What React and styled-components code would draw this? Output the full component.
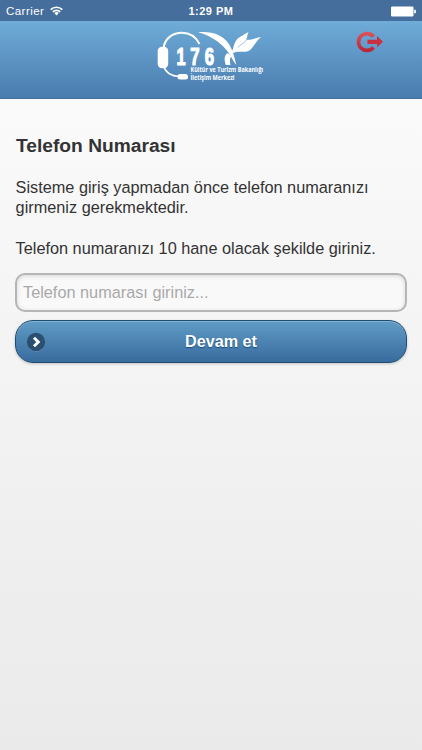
import styled, { createGlobalStyle } from 'styled-components';

const GlobalStyle = createGlobalStyle`
  * {
    box-sizing: border-box;
  }

  body {
    margin: 0;
    font-family: "Liberation Sans", Arial, sans-serif;
    color: #333;
  }
`;

const Screen = styled.div`
  display: flex;
  flex-direction: column;
  height: 750px;
  background: linear-gradient(#fafafa 99px, #eaeaea);
  overflow: hidden;
`;

const StatusBar = styled.div`
  display: grid;
  grid-template-columns: 1fr auto 1fr;
  align-items: center;
  height: 21px;
  padding: 1px 6px 0;
  background: #456e9c;
  color: #fff;
  font-size: 11.5px;
  line-height: 20px;
`;

const Carrier = styled.div`
  display: flex;
  align-items: center;
  gap: 6px;
  letter-spacing: 0.45px;
`;

const Clock = styled.span`
  font-weight: 700;
  font-size: 11px;
  letter-spacing: 0.5px;
`;

const Battery = styled.svg`
  justify-self: end;
`;

const Header = styled.header`
  display: grid;
  grid-template-columns: 1fr 120px 1fr;
  height: 78px;
  padding-top: 3px;
  background: linear-gradient(#6facd8, #497bae);
  border-bottom: 1px solid #456f9a;
`;

const Logo = styled.svg`
  width: 120px;
  height: 62px;
  margin-left: -1px;
`;

const ExitButton = styled.button`
  justify-self: end;
  width: 40px;
  height: 36px;
  margin-right: 32px;
  padding: 0;
  border: 0;
  background: none;
`;

const Content = styled.main`
  display: flex;
  flex-direction: column;
  padding: 36px 15px 0;
`;

const Title = styled.h1`
  margin: 0 0 20px 1px;
  font-size: 19.2px;
  line-height: 22px;
`;

const Text = styled.p`
  margin: 0 0 20px 0.6px;
  font-size: 16.3px;
  line-height: 20.3px;
  white-space: nowrap;
`;

const PhoneInput = styled.input`
  width: 100%;
  height: 39px;
  margin-top: -5px;
  padding: 0 6px;
  border: 2px solid #b5b5b5;
  border-radius: 10px;
  background: #f9f9f9;
  box-shadow: inset 0 1px 4px rgba(0, 0, 0, 0.15);
  font: 16.3px "Liberation Sans", Arial, sans-serif;

  &::placeholder {
    color: #a9a9a9;
    opacity: 1;
  }
`;

const SubmitButton = styled.button`
  display: grid;
  grid-template-columns: 20px 1fr;
  align-items: center;
  height: 43px;
  margin-top: 8px;
  padding: 1px 10px 0;
  border: 1px solid #1d4c70;
  border-radius: 18px;
  background: linear-gradient(#5f9cc5, #396b9e);
  box-shadow: inset 0 1px 0 rgba(255, 255, 255, 0.25), 0 1px 3px rgba(0, 0, 0, 0.2);
  color: #fff;
  font: 700 16.2px "Liberation Sans", Arial, sans-serif;
  text-shadow: 0 1px 1px #194b7e;
`;

function WifiIcon() {
  return (
    <svg width="13" height="10" viewBox="0 0 13 10" fill="none" stroke="#fff" strokeWidth="1.7">
      <path d="M.7 3.6a8.3 8.3 0 0 1 11.6 0M2.8 5.8a5.3 5.3 0 0 1 7.4 0" />
      <path d="M4.2 7.1a3.3 3.3 0 0 1 4.6 0L6.5 9.6Z" fill="#fff" stroke="none" />
    </svg>
  );
}

function HeadsetLogo() {
  return (
    <Logo viewBox="0 0 120 62" fill="#fff">
      {/* headband and microphone */}
      <path d="M13.5 24C15 14 23 8.8 32 8.8C40 8.8 46 13 49.5 20" fill="none" stroke="#fff" strokeWidth="2.1" />
      <rect x="7.7" y="22.8" width="10.5" height="21.5" rx="4.2" />
      <path d="M14 43C16 49 20 52 29 52.5" fill="none" stroke="#fff" strokeWidth="1.7" />
      <rect x="27.5" y="50" width="10.5" height="5.4" rx="2.5" />
      {/* tulip stem and ear piece */}
      <path d="M48 8.2C62 6.8 72 11 77.5 18C82 24 84 31 86.4 41C83.5 38 82 34 79.5 30C73 20 62 12 48 8.2Z" />
      <path d="M77.5 29C73.5 32 74.5 37 75.8 41H80.5C79.6 37 79.8 34 81.5 32Z" />
      {/* tulip petals */}
      <path d="M80.5 27.5C84 27 82.5 23 85 18.5C87.5 13 92 12 98.5 8C97 11.5 97.5 13.5 96 15.5C101 16.5 105 14 111 13C106 17 104 23 100 26C95 30 87 25 81 30.5Z" />
      <path d="M88 23.5C90 20 94 20 97 15.5" fill="none" stroke="#639dcb" strokeWidth=".6" />
      <g fontFamily="Liberation Sans, sans-serif" fontSize="24" fontWeight="700" textAnchor="middle" stroke="#fff" strokeWidth="1.2">
        <text transform="translate(31 40.5) scale(.68 1)">1</text>
        <text transform="translate(45 40.5) scale(.7 1)">7</text>
        <text transform="translate(59.5 40.5) scale(.7 1)">6</text>
      </g>
      <g fontFamily="Open Sans, sans-serif" fontSize="6" fontWeight="700">
        <text transform="translate(40.5 48.2) scale(.92 1.06)">Kültür ve Turizm Bakanlığı</text>
        <text transform="translate(40.5 56.2) scale(.92 1.06)">İletişim Merkezi</text>
      </g>
    </Logo>
  );
}

function ExitIcon() {
  return (
    <svg width="40" height="36" viewBox="0 0 40 36">
      <defs>
        <linearGradient id="exit" x1="0" y1="0" x2="0" y2="1">
          <stop offset="0" stopColor="#df535b" />
          <stop offset="1" stopColor="#b62335" />
        </linearGradient>
      </defs>
      <path
        fill="url(#exit)"
        d="M25 11.5A10.3 10.3 0 1 0 25 24.5L21.8 22.2A6.5 6.5 0 1 1 21.8 13.8Z"
      />
      <path fill="#c83240" d="M17.5 15.7H27V12L33 17.8L27 23.6V20H17.5Z" />
    </svg>
  );
}

function ArrowIcon() {
  return (
    <svg width="20" height="20" viewBox="0 0 20 20">
      <circle cx="10" cy="10.7" r="9" fill="#79a5c9" />
      <circle cx="10" cy="10" r="9.2" fill="#2b4f70" />
      <path d="M8 5.7L12.3 10L8 14.3" fill="none" stroke="#fff" strokeWidth="2.9" />
    </svg>
  );
}

export default function App() {
  return (
    <>
      <GlobalStyle />
      <Screen>
        <StatusBar>
          <Carrier>
            Carrier
            <WifiIcon />
          </Carrier>
          <Clock>1:29 PM</Clock>
          <Battery width="26" height="11" viewBox="0 0 26 11" fill="#fff">
            <rect x="1" y=".5" width="22.5" height="10" rx="1.2" />
            <path d="M24.2 3.5a2 2 0 0 1 0 4Z" />
          </Battery>
        </StatusBar>
        <Header>
          <span />
          <HeadsetLogo />
          <ExitButton type="button" aria-label="Çıkış">
            <ExitIcon />
          </ExitButton>
        </Header>
        <Content>
          <Title>Telefon Numarası</Title>
          <Text>
            Sisteme giriş yapmadan önce telefon numaranızı
            <br />
            girmeniz gerekmektedir.
          </Text>
          <Text>Telefon numaranızı 10 hane olacak şekilde giriniz.</Text>
          <PhoneInput type="tel" placeholder="Telefon numarası giriniz..." />
          <SubmitButton type="button">
            <ArrowIcon />
            Devam et
          </SubmitButton>
        </Content>
      </Screen>
    </>
  );
}
